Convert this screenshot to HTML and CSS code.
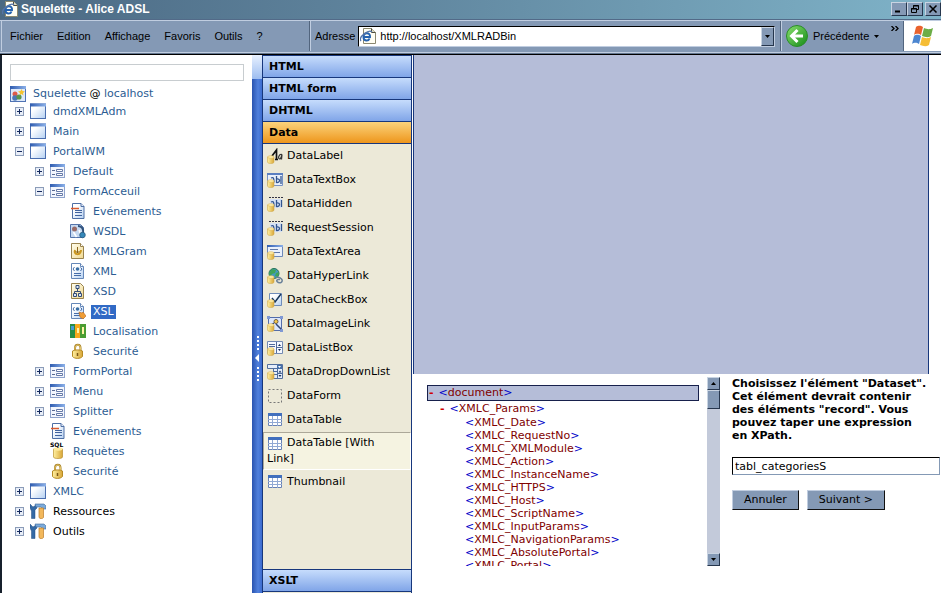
FILE: index.html
```html
<!DOCTYPE html>
<html lang="fr">
<head>
<meta charset="utf-8">
<title>Squelette - Alice ADSL</title>
<link rel="stylesheet" href="styles.css">
</head>
<body>
<svg class="sprite" aria-hidden="true">
  <defs>
    <linearGradient id="g-paper" x1="0" y1="0" x2="1" y2="1"><stop offset=".3" stop-color="#fff"/><stop offset="1" stop-color="#b4d0f2"/></linearGradient>
    <linearGradient id="g-cream" x1="0" y1="0" x2="1" y2="1"><stop offset="0" stop-color="#fffef0"/><stop offset="1" stop-color="#f0d890"/></linearGradient>
    <linearGradient id="g-head" x1="0" y1="0" x2="1" y2="0"><stop offset="0" stop-color="#2f5cb0"/><stop offset="1" stop-color="#8bb0e8"/></linearGradient>
    <linearGradient id="g-gold" x1="0" y1="0" x2="1" y2="0"><stop offset="0" stop-color="#fff0a0"/><stop offset="1" stop-color="#d8a638"/></linearGradient>
    <linearGradient id="g-go" x1="0" y1="0" x2="1" y2="1"><stop offset="0" stop-color="#8be070"/><stop offset="1" stop-color="#138a16"/></linearGradient>
    <symbol id="cyl" viewBox="0 0 16 16"><path d="M.5 9v5c0 2 6.500 2 6.500 0V9z" fill="url(#g-gold)" stroke="#d2ac50" stroke-width=".6"/><ellipse cx="3.800" cy="9" rx="3.200" ry="1.300" fill="#ffeea8" stroke="#dcb65a" stroke-width=".6"/></symbol>
    <symbol id="plus" viewBox="0 0 9 9"><rect x=".5" y=".5" width="8" height="8" fill="#e9eef8" stroke="#8b9cb8"/><path d="M2 4.500h5M4.500 2v5" stroke="#14295c"/></symbol>
    <symbol id="minus" viewBox="0 0 9 9"><rect x=".5" y=".5" width="8" height="8" fill="#e9eef8" stroke="#8b9cb8"/><path d="M2 4.500h5" stroke="#14295c"/></symbol>
    <symbol id="win" viewBox="0 0 16 16"><rect x=".5" y="1" width="15" height="14.500" fill="url(#g-paper)" stroke="#4a6eaf"/><path d="M0 .5h16v3H0z" fill="url(#g-head)"/></symbol>
    <symbol id="form" viewBox="0 0 16 16"><rect x=".5" y="1.500" width="14" height="13" fill="#f3f6fd" stroke="#8fa3cc"/><path d="M0 1h15v3H0z" fill="url(#g-head)"/><path d="M2 7.500h3M2 11.500h3" stroke="#596a92"/><path d="M6.500 6.500h6v2h-6zM6.500 10.500h6v2h-6z" fill="#fff" stroke="#667aa8"/></symbol>
    <symbol id="root" viewBox="0 0 16 16"><rect x=".5" y=".5" width="15" height="15" fill="#dce9fa" stroke="#5073b4"/><path d="M0 0h16v3H0z" fill="url(#g-head)"/><circle cx="5" cy="8" r="2.500" fill="#dc5a4a"/><circle cx="5" cy="12" r="2.800" fill="#4a78b8"/><circle cx="9" cy="11" r="2.600" fill="#58954e"/><path d="M11.500 3l1 2 2.500.5-2 1.500.5 2.500-2-1.500-2 1.500.5-2.500-2-1.500 2.500-.5z" fill="#f5c32e"/></symbol>
    <symbol id="event" viewBox="0 0 16 16"><path d="M2.500.5h8.500l3 3v12H2.500z" fill="url(#g-paper)" stroke="#4e6fa5"/><path d="M11 .5v3h3" fill="#e7effb" stroke="#4e6fa5"/><path d="M5 7.500h7M5 9.500h7M5 12.500h7" stroke="#42649f"/><path d="M1 5.500h8" stroke="#d85b2f" stroke-width="1.500"/></symbol>
    <symbol id="wsdl" viewBox="0 0 16 16"><path d="M.5 1.500h10l3 3v10H.5z" fill="#c6d9f1" stroke="#5474ab"/><circle cx="4.500" cy="6" r="2.500" fill="#986b68"/><path d="M8 3c4 0 6 3 5 8" fill="none" stroke="#30527a" stroke-width="2"/><path d="M3.500 9l3 5M9 7l2 5" stroke="#fff" stroke-width="1.500"/><circle cx="12.500" cy="12" r="2.800" fill="#3688b9" stroke="#245379" stroke-width=".7"/></symbol>
    <symbol id="gram" viewBox="0 0 16 16"><path d="M1.500.5h9l3 3v12h-12z" fill="url(#g-cream)" stroke="#99834f"/><path d="M10.500.5v3h3" fill="#fff" stroke="#99834f"/><path d="M5 7c-2 5 6 6 6 0" fill="none" stroke="#cc971f" stroke-width="2"/><path d="M7.500 4v6M5.500 8l2 2 2-2" fill="none" stroke="#8a6419"/></symbol>
    <symbol id="xml" viewBox="0 0 16 16"><path d="M1.500.5h9l3 3v12h-12z" fill="url(#g-paper)" stroke="#6587b8"/><path d="M10.500.5v3h3" fill="#fff" stroke="#6587b8"/><path d="M4.500 4L3 6l1.500 2M10.500 4.500L12 6l-1.500 2M4 10.500h7M4 12.500h7" fill="none" stroke="#466da9"/><circle cx="7.500" cy="6" r="1.800" fill="#376da3"/></symbol>
    <symbol id="xsd" viewBox="0 0 16 16"><path d="M1.500.5h9l3 3v12h-12z" fill="url(#g-cream)" stroke="#99834f"/><path d="M7.500 5v3.500M4.500 11V8.500h6V11" fill="none" stroke="#344c76"/><path d="M6 2.500h3v3H6zM3.500 10.500h3v3h-3zM8.500 10.500h3v3h-3z" fill="#d9e6f7" stroke="#344c76"/></symbol>
    <symbol id="xsl" viewBox="0 0 16 16"><use href="#xml"/><path d="M9 9l3 1 1-1 3 4-3 3-3-2z" fill="#ef9d35" stroke="#b8661d" stroke-width=".6"/></symbol>
    <symbol id="locale" viewBox="0 0 16 16"><path d="M0 1h5v14H0z" fill="#278c46"/><path d="M5 1h5v14H5z" fill="#f5a91e"/><path d="M10 1h6v14h-6z" fill="#4a9d33"/><path d="M1 3h3v4H1z" fill="#4699d4"/><path d="M7 5h2v5H7zM12 4h2v7h-2z" fill="#fff3a5"/></symbol>
    <symbol id="lock" viewBox="0 0 16 16"><path d="M5 8V5c0-4.500 5.500-4.500 5.500 0v3" fill="none" stroke="#a88125" stroke-width="2"/><path d="M5 8V5c0-4 5.500-4 5.500 0v3" fill="none" stroke="#f5da83" stroke-width=".8"/><path d="M2.500 8c2-1.500 8-1.500 10 0v5.500c-2 2.500-8 2.500-10 0z" fill="url(#g-gold)" stroke="#b68b24"/><path d="M7.500 10v3" stroke="#7c5a18" stroke-width="1.500"/></symbol>
    <symbol id="sql" viewBox="0 0 16 16"><path d="M3.500 6v8c0 2 9 2 9 0V6z" fill="url(#g-gold)" stroke="#ba902e" stroke-width=".7"/><ellipse cx="8" cy="6" rx="4.500" ry="1.700" fill="#ffeb9e"/></symbol>
    <symbol id="tools" viewBox="0 0 16 16"><path d="M0 1l3 3 3-2 1 3-2 2v8.500H1.500V8L0 5z" fill="#356aa5" stroke="#244e80" stroke-width=".5"/><path d="M5 1h9l2 2v3h-3L11 4H6z" fill="#7baada" stroke="#3d6a9c" stroke-width=".6"/><path d="M9 5h4.500v9.500c-1 1.500-3.500 1.500-4.500 0z" fill="#f2b85b" stroke="#bb7b28" stroke-width=".7"/></symbol>
    <symbol id="label" viewBox="0 0 16 16"><path d="M5 8l4.500-6v9M8 11.500h3" fill="none" stroke="#111" stroke-width="1.700"/><path d="M15 6.500c-3-1-4.500 4-2.500 4.500 1.500 0 2.500-4.500 2.500-4.500l-.5 5" fill="none" stroke="#333" stroke-width="1.200"/><use href="#cyl"/></symbol>
    <symbol id="tbox" viewBox="0 0 16 16"><path d="M.5 1.500h15v12H.5z" fill="#e8effb" stroke="#7892c4"/><path d="M0 1h16v2H0z" fill="#5b7fc1"/><path d="M4 6c2.500-1 3 0 3 4.500M9.500 4v7M9.500 7c4-1 4 4 0 3.500M14 4v8" fill="none" stroke="#31548f" stroke-width="1.300"/><use href="#cyl"/></symbol>
    <symbol id="hidden" viewBox="0 0 16 16"><path d="M2 1.500h14" stroke="#334" stroke-dasharray="2 1"/><path d="M3 3h12v9H3z" fill="#d6e1f4"/><path d="M4 6c2.500-1 3 0 3 4.500M9.500 4v7M9.500 7c4-1 4 4 0 3.500M14.500 4v7" fill="none" stroke="#31548f" stroke-width="1.300"/><use href="#cyl"/></symbol>
    <symbol id="area" viewBox="0 0 16 16"><path d="M.5 1.500h15v11H.5z" fill="#e9f0fc" stroke="#6d88b9"/><path d="M0 1h16v2H0z" fill="url(#g-head)"/><path d="M3 5.500h8M6 8.500h7" stroke="#6179a9"/><use href="#cyl"/></symbol>
    <symbol id="link" viewBox="0 0 16 16"><circle cx="7" cy="5.500" r="5" fill="#459ac0" stroke="#257254"/><path d="M5 1l4 1-1 3-3 1-2 3-1-4zM9 5l3-1-1 5-3-1z" fill="#40a459"/><path d="M9 9.500c5-1 8 3.500 5 5-3 1-6-2-3-3h2" fill="none" stroke="#6a8199" stroke-width="1.500"/><use href="#cyl"/></symbol>
    <symbol id="check" viewBox="0 0 16 16"><path d="M2.500 1.500h12v12h-12z" fill="url(#g-paper)" stroke="#6f8cba"/><path d="M5 6l3 4 6-8" fill="none" stroke="#17365b" stroke-width="1.500"/><use href="#cyl"/></symbol>
    <symbol id="image" viewBox="0 0 16 16"><path d="M1.500 1.500h13v13h-13z" fill="#dbe6fb" stroke="#536dab"/><path d="M0 0h3v3H0zM13 0h3v3h-3zM13 13h3v3h-3z" fill="#7f98d4"/><circle cx="9" cy="5.500" r="2" fill="#f5ca48" stroke="#735e45"/><path d="M9 8l5 5M4 9l3-2" fill="none" stroke="#344873" stroke-width="1.500"/><use href="#cyl"/></symbol>
    <symbol id="list" viewBox="0 0 16 16"><path d="M.5 1.500h15v12H.5z" fill="#f5f8ff" stroke="#7289b2"/><path d="M2 4.500h6M2 6.500h6M9.500 2v11M10 7.500h5" stroke="#516a9a"/><path d="M11 6l1.500-2L14 6zM11 9l1.500 2L14 9z" fill="#17315f"/><use href="#cyl"/></symbol>
    <symbol id="drop" viewBox="0 0 16 16"><path d="M.5.500h15v4H.5zM6.500 4.500h9v10h-9z" fill="#e6eefb" stroke="#536f9d"/><path d="M10 1h5v4h-5z" fill="#4770aa"/><path d="M11 2l1.500 2L14 2z" fill="#fff"/><path d="M7 7.500h3M7 10.500h3M10.500 5v9M11 9.500h4" stroke="#4e6c9b"/><path d="M11.500 8.500L13 6.500l1.500 2zM11.500 11L13 13l1.500-2z" fill="#17315f"/><use href="#cyl"/></symbol>
    <symbol id="dash" viewBox="0 0 16 16"><path d="M1.500 1.500h13v13h-13z" fill="none" stroke="#777" stroke-dasharray="2 2"/></symbol>
    <symbol id="table" viewBox="0 0 16 16"><path d="M1.500 1.500h13v12h-13z" fill="#fff" stroke="#6882b4"/><path d="M1 1h14v3H1z" fill="#416fbd"/><path d="M1 7.500h14M1 10.500h14M5.500 4v10M10.500 4v10" stroke="#91a9d4"/></symbol>
    <symbol id="ie" viewBox="0 0 16 16"><path d="M3.500.5h8l4 4v11h-12z" fill="#fffef4" stroke="#8b886f"/><path d="M11.500.5v4h4" fill="#e1dfc7" stroke="#504e3f"/><path d="M9.500 10.500c-1 3-6 3-6-1.500 0-5 7-5 6.500 0H4" fill="none" stroke="#2663b0" stroke-width="2"/><path d="M1 13C-2 9 9 1 12 4" fill="none" stroke="#5374a8" stroke-width="1.300"/></symbol>
  </defs>
</svg>

<header class="titlebar">
  <svg class="icon"><use href="#ie"/></svg>
  <h1>Squelette - Alice ADSL</h1>
  <div class="winbtns">
    <button aria-label="Réduire"><svg viewBox="0 0 10 8"><path d="M1 6.500h5" stroke="#000" stroke-width="2"/></svg></button>
    <button aria-label="Restaurer"><svg viewBox="0 0 10 8"><path d="M3.500 3V.5h5v4H7M3 1h6M1.500 3.500h5v4h-5zM1 4h6" fill="none" stroke="#000"/></svg></button>
    <button class="close" aria-label="Fermer"><svg viewBox="0 0 10 8"><path d="M1.500.5l7 7M8.500.5l-7 7" stroke="#000" stroke-width="1.500"/></svg></button>
  </div>
</header>

<div class="toolbar">
  <nav class="menu">
    <button>Fichier</button><button>Edition</button><button>Affichage</button><button>Favoris</button><button>Outils</button><button>?</button>
  </nav>
  <form class="address">
    <label for="url">Adresse</label>
    <div class="urlbox">
      <svg class="icon"><use href="#ie"/></svg>
      <input id="url" type="text" value="http://localhost/XMLRADBin">
      <button type="button" class="bevel" aria-label="Liste des adresses"><svg viewBox="0 0 5 3"><path d="M0 0h5L2.500 3z"/></svg></button>
    </div>
  </form>
  <div class="navigate">
    <button class="back">
      <svg class="go" viewBox="0 0 22 22"><circle cx="11" cy="11" r="10.500" fill="url(#g-go)" stroke="#2a8d28"/><path d="M11.500 5l-6 6 6 6M6 11h11" fill="none" stroke="#fff" stroke-width="3"/></svg>
      <span>Précédente</span>
      <svg class="caret" viewBox="0 0 5 3"><path d="M0 0h5L2.500 3z"/></svg>
    </button>
    <button class="more" aria-label="Plus"><svg viewBox="0 0 8 5"><path d="M.5 0L3 2.500.5 5M4.500 0L7 2.500 4.500 5" fill="none" stroke="#000" stroke-width="1.300"/></svg></button>
  </div>
  <div class="brand">
    <svg viewBox="0 0 24 24"><path d="M5 3c3-2 5-1 7 0l-2 8c-2-1-4-2-7 0z" fill="#e9622d"/><path d="M13 4c3 1 5 2 9 0l-2 8c-3 2-6 1-9 0z" fill="#6cad46"/><path d="M3 12c3-2 5-1 7 0l-2 8c-2-1-4-2-7 0z" fill="#4c86d0"/><path d="M11 13c3 1 5 2 9 0l-2 8c-3 2-6 1-9 0z" fill="#f5bd35"/></svg>
  </div>
</div>

<main class="workspace">
  <section class="explorer">
    <input class="filter" type="text" aria-label="Filtre">
    <div class="root"><svg class="icon"><use href="#root"/></svg><span><a href="#">Squelette</a> @ <a href="#">localhost</a></span></div>
    <ul class="tree">
      <li><div class="row"><button aria-label="Ouvrir"><svg><use href="#plus"/></svg></button><svg class="icon"><use href="#win"/></svg><a href="#">dmdXMLAdm</a></div></li>
      <li><div class="row"><button aria-label="Ouvrir"><svg><use href="#plus"/></svg></button><svg class="icon"><use href="#win"/></svg><a href="#">Main</a></div></li>
      <li><div class="row"><button aria-label="Fermer"><svg><use href="#minus"/></svg></button><svg class="icon"><use href="#win"/></svg><a href="#">PortalWM</a></div>
        <ul>
          <li><div class="row"><button aria-label="Ouvrir"><svg><use href="#plus"/></svg></button><svg class="icon"><use href="#form"/></svg><a href="#">Default</a></div></li>
          <li><div class="row"><button aria-label="Fermer"><svg><use href="#minus"/></svg></button><svg class="icon"><use href="#form"/></svg><a href="#">FormAcceuil</a></div>
            <ul>
              <li><div class="row leaf"><svg class="icon"><use href="#event"/></svg><a href="#">Evénements</a></div></li>
              <li><div class="row leaf"><svg class="icon"><use href="#wsdl"/></svg><a href="#">WSDL</a></div></li>
              <li><div class="row leaf"><svg class="icon"><use href="#gram"/></svg><a href="#">XMLGram</a></div></li>
              <li><div class="row leaf"><svg class="icon"><use href="#xml"/></svg><a href="#">XML</a></div></li>
              <li><div class="row leaf"><svg class="icon"><use href="#xsd"/></svg><a href="#">XSD</a></div></li>
              <li><div class="row leaf"><svg class="icon"><use href="#xsl"/></svg><a class="selected" href="#">XSL</a></div></li>
              <li><div class="row leaf"><svg class="icon"><use href="#locale"/></svg><a href="#">Localisation</a></div></li>
              <li><div class="row leaf"><svg class="icon"><use href="#lock"/></svg><a href="#">Securité</a></div></li>
            </ul>
          </li>
          <li><div class="row"><button aria-label="Ouvrir"><svg><use href="#plus"/></svg></button><svg class="icon"><use href="#form"/></svg><a href="#">FormPortal</a></div></li>
          <li><div class="row"><button aria-label="Ouvrir"><svg><use href="#plus"/></svg></button><svg class="icon"><use href="#form"/></svg><a href="#">Menu</a></div></li>
          <li><div class="row"><button aria-label="Ouvrir"><svg><use href="#plus"/></svg></button><svg class="icon"><use href="#form"/></svg><a href="#">Splitter</a></div></li>
          <li><div class="row leaf"><svg class="icon"><use href="#event"/></svg><a href="#">Evénements</a></div></li>
          <li><div class="row leaf"><span class="sqlicon"><svg class="icon"><use href="#sql"/></svg><small>SQL</small></span><a href="#">Requètes</a></div></li>
          <li><div class="row leaf"><svg class="icon"><use href="#lock"/></svg><a href="#">Securité</a></div></li>
        </ul>
      </li>
      <li><div class="row"><button aria-label="Ouvrir"><svg><use href="#plus"/></svg></button><svg class="icon"><use href="#win"/></svg><a href="#">XMLC</a></div></li>
      <li><div class="row"><button aria-label="Ouvrir"><svg><use href="#plus"/></svg></button><svg class="icon"><use href="#tools"/></svg><span>Ressources</span></div></li>
      <li><div class="row"><button aria-label="Ouvrir"><svg><use href="#plus"/></svg></button><svg class="icon"><use href="#tools"/></svg><span>Outils</span></div></li>
    </ul>
  </section>

  <button class="splitter" aria-label="Masquer le panneau">
    <svg viewBox="0 0 6 46"><path d="M4 1v15M4 32v14" stroke="#fff" stroke-width="2" stroke-dasharray="2 2"/><path d="M5 19v8l-4-4z" fill="#fff"/></svg>
  </button>

  <section class="palette">
    <button class="bar">HTML</button>
    <button class="bar">HTML form</button>
    <button class="bar">DHTML</button>
    <button class="bar active">Data</button>
    <div class="items">
      <button><svg class="icon"><use href="#label"/></svg>DataLabel</button>
      <button><svg class="icon"><use href="#tbox"/></svg>DataTextBox</button>
      <button><svg class="icon"><use href="#hidden"/></svg>DataHidden</button>
      <button><svg class="icon"><use href="#hidden"/></svg>RequestSession</button>
      <button><svg class="icon"><use href="#area"/></svg>DataTextArea</button>
      <button><svg class="icon"><use href="#link"/></svg>DataHyperLink</button>
      <button><svg class="icon"><use href="#check"/></svg>DataCheckBox</button>
      <button><svg class="icon"><use href="#image"/></svg>DataImageLink</button>
      <button><svg class="icon"><use href="#list"/></svg>DataListBox</button>
      <button><svg class="icon"><use href="#drop"/></svg>DataDropDownList</button>
      <button><svg class="icon"><use href="#dash"/></svg>DataForm</button>
      <button><svg class="icon"><use href="#table"/></svg>DataTable</button>
      <button class="hover"><svg class="icon"><use href="#table"/></svg>DataTable [With Link]</button>
      <button><svg class="icon"><use href="#table"/></svg>Thumbnail</button>
    </div>
    <button class="bar">XSLT</button>
  </section>

  <section class="editor">
    <div class="canvas"></div>
    <div class="dataset">
      <div class="xml">
        <div class="node current"><i>-</i><b>&lt;</b>document<b>&gt;</b></div>
        <div class="node params"><i>-</i><b>&lt;</b>XMLC_Params<b>&gt;</b></div>
        <ul>
          <li><b>&lt;</b>XMLC_Date<b>&gt;</b></li>
          <li><b>&lt;</b>XMLC_RequestNo<b>&gt;</b></li>
          <li><b>&lt;</b>XMLC_XMLModule<b>&gt;</b></li>
          <li><b>&lt;</b>XMLC_Action<b>&gt;</b></li>
          <li><b>&lt;</b>XMLC_InstanceName<b>&gt;</b></li>
          <li><b>&lt;</b>XMLC_HTTPS<b>&gt;</b></li>
          <li><b>&lt;</b>XMLC_Host<b>&gt;</b></li>
          <li><b>&lt;</b>XMLC_ScriptName<b>&gt;</b></li>
          <li><b>&lt;</b>XMLC_InputParams<b>&gt;</b></li>
          <li><b>&lt;</b>XMLC_NavigationParams<b>&gt;</b></li>
          <li><b>&lt;</b>XMLC_AbsolutePortal<b>&gt;</b></li>
          <li><b>&lt;</b>XMLC_Portal<b>&gt;</b></li>
        </ul>
      </div>
      <div class="scrollbar">
        <button class="bevel" aria-label="Haut"><svg viewBox="0 0 5 3"><path d="M0 3h5L2.500 0z"/></svg></button>
        <div class="thumb bevel"></div>
        <button class="bevel down" aria-label="Bas"><svg viewBox="0 0 5 3"><path d="M0 0h5L2.500 3z"/></svg></button>
      </div>
      <form class="wizard">
        <label for="xpath">Choisissez l'élément "Dataset". Cet élément devrait contenir des éléments "record". Vous pouvez taper une expression en XPath.</label>
        <input id="xpath" type="text" value="tabl_categoriesS">
        <div class="actions"><button type="button">Annuler</button><button type="button">Suivant &gt;</button></div>
      </form>
    </div>
  </section>
</main>
</body>
</html>
```
FILE: styles.css
```css
* { box-sizing: border-box; }

body {
  margin: 0;
  height: 100vh;
  display: flex;
  flex-direction: column;
  overflow: hidden;
  background: #fff;
  color: #000;
  font: 11px/14px "DejaVu Sans", sans-serif;
}

button, input { font: inherit; color: inherit; }
button { margin: 0; padding: 0; border: 0; background: none; }
svg { display: block; flex: none; }
ul { list-style: none; margin: 0; padding: 0; }
a { color: #2c5c92; text-decoration: none; }

.sprite { position: absolute; width: 0; height: 0; }
.icon { width: 16px; height: 16px; }

.titlebar {
  flex: none;
  height: 19px;
  display: flex;
  align-items: center;
  gap: 3px;
  padding: 0 0 1px 2px;
  background: linear-gradient(90deg, #4b6983, #5f849d 40%, #7fb3c8);
}
.titlebar h1 {
  flex: 1;
  margin: 0;
  color: #fff;
  font: bold 12px/16px "Liberation Sans", sans-serif;
}
.winbtns { display: flex; }
.winbtns button, .bevel {
  display: flex;
  align-items: center;
  justify-content: center;
  background: #8499b5;
  border: 1px solid;
  border-color: #c9d4e2 #26364d #26364d #c9d4e2;
}
.winbtns button { width: 16px; height: 14px; }
.winbtns .close { margin-left: 2px; }
.winbtns svg { width: 10px; height: 8px; }
.bevel svg, .caret { width: 5px; height: 3px; }

.toolbar {
  flex: none;
  height: 36px;
  display: flex;
  padding: 1px 0 3px 1px;
  background: #8499b5;
  border-top: 1px solid #526a88;
  border-bottom: 1px solid #000;
  box-shadow: inset 0 1px #c0cde0, inset 0 -1px #62758e, inset 0 -2px #c0cde0;
  font: 11px/14px "Liberation Sans", sans-serif;
}
.menu {
  flex: 0 0 309px;
  display: flex;
  align-items: center;
  gap: 14px;
  padding-left: 8px;
  border-left: 1px solid #c0cde0;
}
.address {
  flex: 1;
  display: flex;
  align-items: center;
  gap: 3px;
  padding: 0 6px 0 4px;
  border-left: 1px solid #c0cde0;
  box-shadow: -1px 0 #52657e;
}
.urlbox {
  flex: 1;
  height: 21px;
  display: flex;
  align-items: center;
  padding: 0 0 0 1px;
  background: #fff;
  border: 1px solid;
  border-color: #000 #c0cde0 #c0cde0 #000;
}
.urlbox input {
  flex: 1;
  min-width: 0;
  padding: 0 4px;
  border: 0;
  outline: 0;
  background: none;
}
.urlbox button { width: 13px; height: 19px; }
.navigate {
  flex: 0 0 122px;
  display: flex;
  justify-content: space-between;
  padding: 0 4px;
  border-left: 1px solid #c0cde0;
  box-shadow: -1px 0 #52657e;
}
.back { display: flex; align-items: center; gap: 5px; }
.go { width: 22px; height: 22px; }
.more { align-self: flex-start; padding-top: 5px; }
.more svg { width: 8px; height: 5px; }
.brand {
  flex: 0 0 38px;
  display: flex;
  align-items: center;
  justify-content: center;
  background: #fff;
  border-left: 1px solid #52657e;
}
.brand svg { width: 24px; height: 24px; }

.workspace {
  flex: 1;
  min-height: 0;
  display: grid;
  grid-template-columns: 252px 10px 150px minmax(0, 1fr);
}

.explorer { padding: 9px 8px 0 8px; border-left: 2px solid #17202c; }
.filter {
  display: block;
  width: 100%;
  height: 17px;
  border: 1px solid #c8cdd0;
  background: #fff;
}
.root { display: flex; align-items: center; gap: 7px; height: 17px; margin-top: 4px; }
.tree { padding-left: 5px; }
.tree ul { padding-left: 20px; }
.row { display: flex; align-items: center; height: 20px; }
.row button { width: 9px; height: 9px; margin: 0 6px 2px 0; }
.row button svg { width: 9px; height: 9px; }
.row > .icon, .sqlicon { margin: 0 5px 2px 0; }
.row > a, .row > span:last-child { padding: 0 2px; }
.leaf { padding-left: 15px; }
.row .selected { background: #316ac5; color: #fff; }
.sqlicon { position: relative; }
.sqlicon small { position: absolute; left: 0; top: -2px; font: bold 6px/8px "DejaVu Sans", sans-serif; }

.splitter {
  display: flex;
  align-items: center;
  justify-content: center;
  padding-top: 68px;
  background:
    linear-gradient(#e8f1ff, #9dbdf0) top / 100% 24px no-repeat,
    linear-gradient(90deg, #2a54b0, #5080dc 60%, #3c6cd0);
}
.splitter svg { width: 6px; height: 46px; }

.palette {
  display: flex;
  flex-direction: column;
  min-height: 0;
  padding-bottom: 1px;
  background: #ece9d8;
  border: solid #17377c;
  border-width: 1px 1px 0 1px;
}
.bar {
  flex: none;
  height: 22px;
  padding: 0 6px;
  text-align: left;
  font-weight: bold;
  background: linear-gradient(#c6dcfc, #80a5e8);
  border-bottom: 1px solid #17377c;
}
.bar:last-child { height: 23px; border-top: 1px solid #17377c; }
.bar.active { background: linear-gradient(#fbd37c, #ee961c); }
.items { flex: 1; min-height: 0; overflow: hidden; }
.items button {
  display: block;
  width: 100%;
  padding: 4px;
  line-height: 16px;
  text-align: left;
}
.items .icon { display: inline-block; vertical-align: top; margin-right: 4px; }
.items .hover {
  padding: 3px 24px 3px 3px;
  background: #f5f3e1;
  border: 1px solid;
  border-color: #aca899 #fff #fff #aca899;
  line-height: 14px;
}

.editor { display: flex; flex-direction: column; min-width: 0; min-height: 0; }
.canvas {
  flex: 1;
  margin: 0 12px 0 1px;
  background: #b5bdd8;
  border: 1px solid #17377c;
  border-width: 0 1px;
}
.dataset { flex: none; display: flex; height: 219px; padding: 3px 1px 27px 15px; }
.xml { flex: 1; min-width: 0; overflow: hidden; padding-top: 8px; color: #800000; line-height: 13px; }
.xml b { color: #0000c8; font-weight: normal; }
.xml i { color: #d00000; font-style: normal; font-weight: bold; margin-right: 5px; }
.node { padding-left: 13px; line-height: 15px; }
.current { padding: 0 0 0 1px; line-height: 14px; background: #b5bdd8; border: 1px solid #17204c; }
.xml ul { padding-left: 38px; }
.scrollbar {
  flex: 0 0 13px;
  display: flex;
  flex-direction: column;
  margin: 0 12px 0 8px;
  background: #c3cada;
}
.scrollbar button { width: 13px; height: 13px; }
.thumb { height: 19px; }
.down { margin-top: auto; }
.wizard { flex: 0 0 208px; display: flex; flex-direction: column; }
.wizard label { padding-right: 13px; font-weight: bold; line-height: 13px; }
.wizard input {
  height: 18px;
  margin: 15px 0;
  padding: 0 2px;
  border: 1px solid;
  border-color: #000 #8499b5 #8499b5 #000;
  background: #fff;
}
.actions { display: flex; gap: 8px; }
.actions button {
  height: 20px;
  padding: 0 11px;
  background: #8499b5;
  border: 1px solid;
  border-color: #c0cde0 #111 #111 #c0cde0;
}
```
